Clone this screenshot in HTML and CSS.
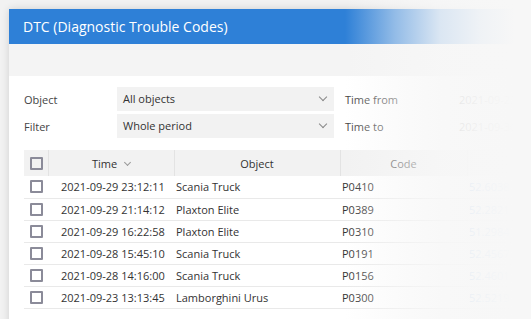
FILE: index.html
```html
<!DOCTYPE html>
<html lang="en">
  <head>
    <meta charset="UTF-8" />
    <meta name="viewport" content="width=device-width, initial-scale=1.0" />
    <title>DTC</title>
    <link rel="stylesheet" href="styles.css">
  </head>
  <body>
    <div class="panel">
      <div class="panel-header">DTC (Diagnostic Trouble Codes)</div>
      <div class="toolbar"></div>
      <div class="panel-body">
        <div class="filters">
          <div class="label">Object</div>
          <div class="select">All objects <span class="chevron"></span></div>
          <div class="label">Time from</div>
          <div class="value">2021-09-23</div>

          <div class="label">Filter</div>
          <div class="select">Whole period <span class="chevron"></span></div>
          <div class="label">Time to</div>
          <div class="value">2021-09-30</div>
        </div>

        <table class="grid">
          <thead>
            <tr>
              <th class="col-check"><span class="checkbox"></span></th>
              <th class="col-time">Time <span class="sort"></span></th>
              <th class="col-object">Object</th>
              <th class="col-code">Code</th>
              <th class="col-lat"></th>
            </tr>
          </thead>
          <tbody>
            <tr>
              <td class="col-check"><span class="checkbox"></span></td>
              <td class="col-time">2021-09-29 23:12:11</td>
              <td>Scania Truck</td>
              <td>P0410</td>
              <td class="coord">52.6038</td>
            </tr>
            <tr>
              <td class="col-check"><span class="checkbox"></span></td>
              <td class="col-time">2021-09-29 21:14:12</td>
              <td>Plaxton Elite</td>
              <td>P0389</td>
              <td class="coord">52.2821</td>
            </tr>
            <tr>
              <td class="col-check"><span class="checkbox"></span></td>
              <td class="col-time">2021-09-29 16:22:58</td>
              <td>Plaxton Elite</td>
              <td>P0310</td>
              <td class="coord">51.2984</td>
            </tr>
            <tr>
              <td class="col-check"><span class="checkbox"></span></td>
              <td class="col-time">2021-09-28 15:45:10</td>
              <td>Scania Truck</td>
              <td>P0191</td>
              <td class="coord">52.4567</td>
            </tr>
            <tr>
              <td class="col-check"><span class="checkbox"></span></td>
              <td class="col-time">2021-09-28 14:16:00</td>
              <td>Scania Truck</td>
              <td>P0156</td>
              <td class="coord">52.4601</td>
            </tr>
            <tr>
              <td class="col-check"><span class="checkbox"></span></td>
              <td class="col-time">2021-09-23 13:13:45</td>
              <td>Lamborghini Urus</td>
              <td>P0300</td>
              <td class="coord">52.5219</td>
            </tr>
          </tbody>
        </table>
      </div>
    </div>
    <div class="fade"></div>
  </body>
</html>
```

FILE: styles.css
```css
html,
body {
  height: 100%;
}
body {
  margin: 0;
  padding: 9px 0 0 9px;
  box-sizing: border-box;
  overflow: hidden;
  background: #f2f2f2;
  font-family: "Open Sans", Arial, sans-serif;
  font-size: 11px;
  color: #333;
}
.panel {
  width: 600px;
  height: 400px;
  background: #fff;
  box-shadow: 0 0 8px rgba(0, 0, 0, 0.14);
}
.panel-header {
  height: 35px;
  line-height: 35px;
  padding-left: 14px;
  background: #2e80d7;
  color: #fff;
  font-size: 14px;
}
.toolbar {
  height: 32px;
  background: #f4f4f4;
}
.panel-body {
  padding: 11px 0 0 15px;
}
.filters {
  display: grid;
  grid-template-columns: 93px 217px 125px 80px;
  grid-auto-rows: 24px;
  row-gap: 3px;
  align-items: center;
}
.filters .label {
  color: #444;
}
.filters .label:nth-child(4n + 3) {
  padding-left: 11px;
}
.select {
  height: 24px;
  line-height: 24px;
  padding-left: 6px;
  background: #f2f2f2;
  color: #333;
  position: relative;
}
.chevron {
  position: absolute;
  right: 8px;
  top: 7px;
  width: 5px;
  height: 5px;
  border-right: 1.5px solid #888;
  border-bottom: 1.5px solid #888;
  transform: rotate(45deg);
}
.value {
  color: #555;
}
.grid {
  margin-top: 12px;
  border-collapse: collapse;
  table-layout: fixed;
  width: 520px;
}
.grid th,
.grid td {
  box-sizing: border-box;
}
.grid th {
  height: 26px;
  background: #f2f2f2;
  font-weight: normal;
  color: #333;
  border-left: 1px solid #e3e3e3;
  padding: 0;
}
.grid th:first-child {
  border-left: none;
}
.grid td {
  height: 22px;
  border-bottom: 1px solid #e9e9e9;
  padding: 0 0 0 2px;
  white-space: nowrap;
}
.grid td.col-time {
  padding-left: 13px;
}
.col-check {
  width: 24px;
}
.grid td.col-check {
  padding: 0 0 0 6px;
}
.grid th.col-check {
  text-align: left;
  padding-left: 6px;
}
.col-time {
  width: 126px;
}
.col-object {
  width: 166px;
}
.col-code {
  width: 127px;
}
.checkbox {
  display: block;
  width: 9px;
  height: 9px;
  border: 2px solid #8b8b99;
  border-radius: 1px;
}
.sort {
  display: inline-block;
  width: 4px;
  height: 4px;
  margin: 0 0 3px 5px;
  border-right: 1.5px solid #999;
  border-bottom: 1.5px solid #999;
  transform: rotate(45deg);
}
.coord {
  color: #2e80d7;
}
.fade {
  position: absolute;
  inset: 0;
  background: linear-gradient(
    to right,
    rgba(247, 247, 247, 0) 345px,
    rgba(247, 247, 247, 0.5) 395px,
    rgba(247, 247, 247, 0.86) 440px,
    rgba(247, 247, 247, 0.96) 480px,
    #f7f7f7 515px
  );
}
```
